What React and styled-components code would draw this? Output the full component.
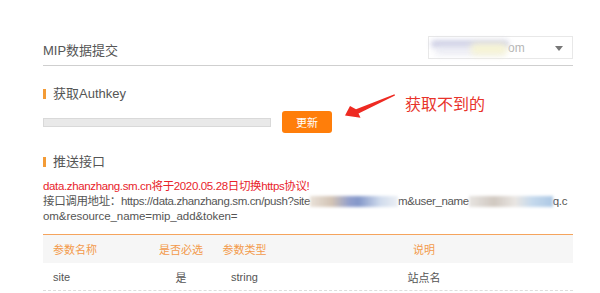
import React from 'react';
import styled, { createGlobalStyle } from 'styled-components';

const GlobalStyle = createGlobalStyle`
    body {
        margin: 0;
        background: #fff;
        font-family: "Liberation Sans", "Noto Sans CJK SC", sans-serif;
        color: #555;
    }
`;

const Page = styled.div`
    position: relative;
    width: 530px;
    padding: 36px 0 0 43px;
`;

const Header = styled.div`
    display: flex;
    justify-content: space-between;
    align-items: center;
    padding-bottom: 6px;
    border-bottom: 1px solid #cfcfcf;
`;

const Title = styled.div`
    font-size: 13px;
    padding-top: 4px;
    color: #555;
`;

const Select = styled.div`
    position: relative;
    box-sizing: border-box;
    width: 145px;
    height: 23px;
    border: 1px solid #e8e8e8;
    display: flex;
    align-items: center;
    font-size: 12px;
    color: #b5b5b5;
    padding-left: 79px;

    &::after {
        content: '';
        position: absolute;
        right: 9px;
        top: 9px;
        border-left: 4px solid transparent;
        border-right: 4px solid transparent;
        border-top: 5px solid #777;
    }
`;

const Blur = styled.span`
    position: absolute;
    left: ${p => p.$left}px;
    top: ${p => p.$top}px;
    width: ${p => p.$w}px;
    height: ${p => p.$h}px;
    background: ${p => p.$bg};
    filter: blur(${p => p.$blur || 2}px);
    opacity: ${p => p.$op || 0.8};
    border-radius: 4px;
    pointer-events: none;
`;

const Heading = styled.div`
    display: flex;
    align-items: center;
    margin-top: ${p => p.$mt}px;
    font-size: 13px;
    line-height: 16px;
    color: #555;

    &::before {
        content: '';
        width: 3px;
        height: 10px;
        margin-right: 7px;
        background: #f39b36;
    }
`;

const AuthRow = styled.div`
    position: relative;
    display: flex;
    align-items: center;
    gap: 11px;
    margin-top: 9px;
    height: 22px;
`;

const KeyInput = styled.div`
    box-sizing: border-box;
    width: 228px;
    height: 9px;
    background: #e9e9e9;
    border: 1px solid #d9d9d9;
`;

const Button = styled.button`
    width: 50px;
    height: 22px;
    border: 0;
    border-radius: 3px;
    background: #ff7e0a;
    color: #fff;
    font-family: inherit;
    font-size: 11px;
    padding: 0;
`;

const Arrow = styled.svg`
    position: absolute;
    left: 297px;
    top: -21px;
`;

const Note = styled.div`
    position: absolute;
    left: 362px;
    top: -15px;
    font-size: 16px;
    line-height: 18px;
    color: #e8332b;
`;

const Notice = styled.div`
    margin-top: 9px;
    font-size: 11.5px;
    line-height: 15px;
    color: #555;
    white-space: nowrap;
`;

const Line = styled.div`
    color: ${p => (p.$warn ? '#e8232b' : 'inherit')};
    letter-spacing: ${p => (p.$tight ? '-0.36px' : '-0.08px')};
`;

const Smudge = styled.span`
    display: inline-block;
    vertical-align: middle;
    width: ${p => p.$w}px;
    height: 11px;
    background: ${p => p.$bg};
    filter: blur(1.6px);
    opacity: 0.85;
`;

const Table = styled.div`
    margin-top: 10px;
    border-top: 1px solid #f5a45d;
    font-size: 11px;
`;

const Row = styled.div`
    display: grid;
    grid-template-columns: 105px 66px 61px 1fr;
    align-items: center;
    height: ${p => (p.$head ? 28 : 27)}px;
    background: ${p => (p.$head ? '#f6f6f6' : '#fff')};
    color: ${p => (p.$head ? '#f39a4b' : '#555')};
    border-bottom: ${p => (p.$head ? '0' : '1px dashed #ddd')};
`;

const Cell = styled.div`
    text-align: ${p => p.$align || 'center'};
    padding-left: ${p => (p.$align === 'left' ? 10 : 0)}px;
`;

const columns = [
    { key: 'name', label: '参数名称', align: 'left' },
    { key: 'required', label: '是否必选' },
    { key: 'type', label: '参数类型' },
    { key: 'desc', label: '说明' },
];

const params = [
    { name: 'site', required: '是', type: 'string', desc: '站点名' },
];

const smudgeA = 'linear-gradient(90deg, #e6ddd2 0%, #cbb9a8 25%, #7f8fc4 45%, #6f86c0 55%, #c9d6ea 80%, #e9edf3 100%)';
const smudgeB = 'linear-gradient(90deg, #e3e0dc 0%, #c9bfb6 30%, #e6e2de 55%, #bcd3ea 75%, #9fbfe0 100%)';

export default function App() {
    return (
        <Page>
            <GlobalStyle />

            {/* title + site picker */}
            <Header>
                <Title>MIP数据提交</Title>
                <Select>
                    om
                    <Blur $left={2} $top={3} $w={78} $h={8} $bg="#c4c6e0" $blur={2.5} />
                    <Blur $left={6} $top={10} $w={70} $h={8} $bg="#e6e7f1" $blur={3} />
                    <Blur $left={42} $top={6} $w={36} $h={12} $bg="#f8f5d2" $blur={3} $op={0.9} />
                </Select>
            </Header>

            <Heading $mt={20}>获取Authkey</Heading>
            <AuthRow>
                <KeyInput />
                <Button>更新</Button>

                {/* screenshot annotation */}
                <Arrow width="60" height="32" viewBox="0 0 60 32">
                    <polygon
                        points="5,25.5 10,16 16,19.2 54.5,4.2 55,5.6 18.5,23.4 20.5,27.8"
                        fill="#ee2a22"
                    />
                </Arrow>
                <Note>获取不到的</Note>
            </AuthRow>

            <Heading $mt={21}>推送接口</Heading>
            <Notice>
                <Line $warn $tight>data.zhanzhang.sm.cn将于2020.05.28日切换https协议!</Line>
                <Line $tight>
                    接口调用地址：https://data.zhanzhang.sm.cn/push?site
                    <Smudge $w={88} $bg={smudgeA} />
                    m&amp;user_name
                    <Smudge $w={84} $bg={smudgeB} />
                    q.c
                </Line>
                <Line>om&amp;resource_name=mip_add&amp;token=</Line>
            </Notice>

            <Table>
                <Row $head>
                    {columns.map(c => (
                        <Cell key={c.key} $align={c.align}>{c.label}</Cell>
                    ))}
                </Row>
                {params.map(p => (
                    <Row key={p.name}>
                        {columns.map(c => (
                            <Cell key={c.key} $align={c.align}>{p[c.key]}</Cell>
                        ))}
                    </Row>
                ))}
            </Table>
        </Page>
    );
}
